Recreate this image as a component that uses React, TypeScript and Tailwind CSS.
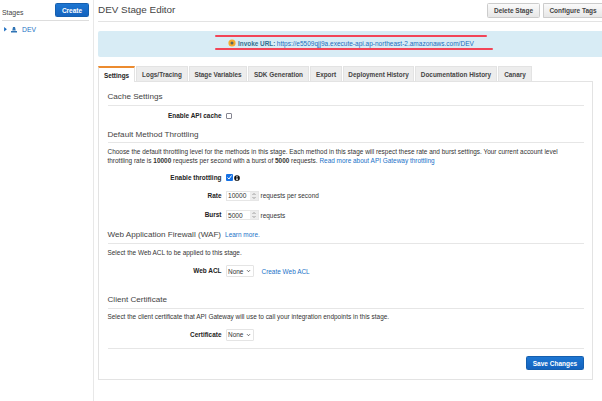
import type { ReactNode } from "react";

const tabs = [
  { label: "Logs/Tracing", box: "w-[52px]" },
  { label: "Stage Variables", box: "w-[58px]" },
  { label: "SDK Generation", box: "w-[61px]" },
  { label: "Export", box: "w-[32px]" },
  { label: "Deployment History", box: "w-[71px]" },
  { label: "Documentation History", box: "w-[82px]" },
  { label: "Canary", box: "w-[34px]" },
];

function Heading({ children, className }: { children: ReactNode; className: string }) {
  return (
    <h2 className={`flex items-center border-b border-[#e6e6e6] text-[8.12px] text-[#444] ${className}`}>
      {children}
    </h2>
  );
}

function Row({ label, children, className }: { label: string; children: ReactNode; className: string }) {
  return (
    <div className={`flex items-center ${className}`}>
      <span className="w-[114px] shrink-0 pb-px text-right font-bold text-[#222]">{label}</span>
      <div className="ml-[4px] flex items-center">{children}</div>
    </div>
  );
}

function NumberField({ value }: { value: string }) {
  return (
    <div className="flex h-[10px] w-[33px] items-center justify-between border border-[#e6e6e6] bg-white pl-[1.5px] text-[6.6px]">
      <span>{value}</span>
      <span className="flex h-[8px] w-[8px] items-center justify-center bg-[#ededed]">
        <svg viewBox="0 0 6 8" className="h-[8px] w-[6px]" fill="none" stroke="#888" strokeWidth=".8">
          <path d="M1.5 3 3 1.5 4.5 3M1.5 5 3 6.5 4.5 5" />
        </svg>
      </span>
    </div>
  );
}

function Select() {
  return (
    <div className="flex h-[12px] w-[28px] items-center justify-between rounded-[1px] border border-[#e4e4e4] bg-white pr-[2px] pl-[1.5px]">
      <span>None</span>
      <svg viewBox="0 0 5 4" className="h-[4px] w-[5px]" fill="none" stroke="#444" strokeWidth=".8">
        <path d="m1 1.2 1.5 1.5L4 1.2" />
      </svg>
    </div>
  );
}

export default function App() {
  return (
    <div className="flex h-[401px] w-[602px] overflow-hidden bg-white font-['Liberation_Sans',Arial,sans-serif] text-[6.45px] leading-[9px] whitespace-nowrap text-[#333]">
      <aside className="w-[93px] shrink-0 pl-[2px]">
        <div className="flex h-[21px] w-[87px] items-start justify-between border-b border-[#ddd] pt-[3px]">
          <span className="mt-[5px] text-[6.9px] text-[#444]">Stages</span>
          <button className="flex h-[14px] w-[34px] items-center justify-center rounded-[1.5px] border border-[#155fae] bg-linear-to-b from-[#1d76d2] to-[#1463be] text-[6.5px] font-bold text-white">
            Create
          </button>
        </div>
        <div className="flex h-[17px] items-center pl-[2px] text-[6.8px] text-[#1a72c4]">
          <svg viewBox="0 0 3 5" className="h-[4.5px] w-[3px] fill-[#1a6bc0]"><path d="M0 0 3 2.5 0 5Z" /></svg>
          <svg viewBox="0 0 12 12" className="ml-[4px] h-[6px] w-[6px] fill-[#2f74b5]">
            <path d="M4 0h4l1.5 7h-7ZM0 8h12v3H0Z" />
          </svg>
          <span className="ml-[5px]">DEV</span>
        </div>
      </aside>

      <main className="flex min-w-0 flex-1 flex-col border-l border-[#e8e8e8] pl-[4px]">
        <header className="flex h-[22px] shrink-0 items-start border-b border-[#e3e3e3] pt-[3px]">
          <h1 className="mt-[2px] text-[9.9px] text-[#444]">DEV Stage Editor</h1>
          <div className="ml-auto flex shrink-0 gap-[3px] text-[6.5px] font-bold text-[#444]">
            <button className="flex h-[15px] w-[53px] items-center justify-center rounded-[1.5px] border border-[#ccc] bg-linear-to-b from-[#fafafa] to-[#e7e7e7]">
              Delete Stage
            </button>
            <button className="flex h-[15px] w-[59px] items-center justify-center rounded-l-[1.5px] border border-r-0 border-[#ccc] bg-linear-to-b from-[#fafafa] to-[#e7e7e7]">
              Configure Tags
            </button>
          </div>
        </header>

        <section className="mt-[9px] h-[26px] shrink-0 rounded-l-[2px] bg-[#d8ecf5] pt-[4px] pl-[117px]">
          <div className="h-[2px] w-[272px] rounded-full bg-[#f24557]" />
          <div className="flex h-[11px] items-center pt-px pl-[13px] text-[6.53px] text-[#1a6fbe]">
            <svg viewBox="0 0 8 8" className="h-[8px] w-[8px] shrink-0">
              <circle cx="4" cy="4" r="3.6" fill="#f5ab2d" />
              <circle cx="4" cy="4" r="1.5" fill="#566963" />
            </svg>
            <span className="ml-[2px] text-[6.4px] font-bold text-[#31708f]">Invoke URL:</span>
            <a className="ml-[1.5px]">https://e5509qjj9a.execute-api.ap-northeast-2.amazonaws.com/DEV</a>
          </div>
          <div className="h-[2px] w-[278px] rounded-full bg-[#f24557]" />
        </section>

        <nav className="mt-[9px] flex h-[15px] shrink-0 gap-px text-[6.4px] font-bold text-[#444]">
          <div className="relative z-10 -mb-px flex w-[37px] items-center justify-center border-x border-t-2 border-x-[#e3e3e3] border-t-[#ec8b2f] bg-white text-[#222]">
            Settings
          </div>
          {tabs.map((tab) => (
            <div key={tab.label} className={`flex shrink-0 items-center justify-center border border-b-0 border-[#e3e3e3] bg-[#ededed] ${tab.box}`}>
              {tab.label}
            </div>
          ))}
        </nav>

        <section className="h-[299px] w-[495px] shrink-0 border border-[#e3e3e3] pr-[8px] pl-[8.5px]">
          <Heading className="h-[24px] pt-[5px]">Cache Settings</Heading>
          <Row label="Enable API cache" className="h-[20px]">
            <span className="h-[6px] w-[6px] rounded-[1px] border border-[#858591] bg-white" />
          </Row>
          <Heading className="h-[17px]">Default Method Throttling</Heading>
          <p className="mt-[4px]">
            <span>Choose the default throttling level for the methods in this stage. Each method in this stage will respect these rate and burst settings. Your current account level</span>
            <br />
            <span>
              throttling rate is <b>10000</b> requests per second with a burst of <b>5000</b> requests.{" "}
              <a className="text-[#1a72c8]">Read more about API Gateway throttling</a>
            </span>
          </p>
          <Row label="Enable throttling" className="mt-[6px] h-[13px]">
            <svg viewBox="0 0 14 14" className="h-[7px] w-[7px]">
              <rect width="14" height="14" rx="2" fill="#1672e5" />
              <path d="m3 7 3 3 5-7" fill="none" stroke="white" strokeWidth="2" />
            </svg>
            <svg viewBox="0 0 12 12" className="ml-[1px] h-[6px] w-[6px]">
              <circle cx="6" cy="6" r="5.7" fill="#111" />
              <path d="M5 2h2v2H5ZM4.5 5H7v4h1v1H4V9h1V6h-.5Z" fill="white" />
            </svg>
          </Row>
          <Row label="Rate" className="mt-[2px] h-[19px]">
            <NumberField value="10000" />
            <span className="ml-[2px]">requests per second</span>
          </Row>
          <Row label="Burst" className="h-[20px]">
            <NumberField value="5000" />
            <span className="ml-[2px]">requests</span>
          </Row>
          <Heading className="h-[19px]">
            Web Application Firewall (WAF)
            <a className="ml-[4px] text-[6.45px] text-[#1a72c8]">Learn more.</a>
          </Heading>
          <p className="mt-[4px]">Select the Web ACL to be applied to this stage.</p>
          <Row label="Web ACL" className="mt-[7px] h-[14px]">
            <Select />
            <a className="ml-[8px] text-[#1a72c8]">Create Web ACL</a>
          </Row>
          <Heading className="mt-[12px] h-[19px]">Client Certificate</Heading>
          <p className="mt-[3px]">Select the client certificate that API Gateway will use to call your integration endpoints in this stage.</p>
          <Row label="Certificate" className="h-[28px] border-b border-[#e6e6e6]">
            <Select />
          </Row>
          <div className="flex justify-end pt-[7px]">
            <button className="flex h-[14px] w-[58px] items-center justify-center rounded-[1.5px] border border-[#155fae] bg-linear-to-b from-[#1d76d2] to-[#1463be] text-[6.5px] font-bold text-white">
              Save Changes
            </button>
          </div>
        </section>
      </main>
    </div>
  );
}
